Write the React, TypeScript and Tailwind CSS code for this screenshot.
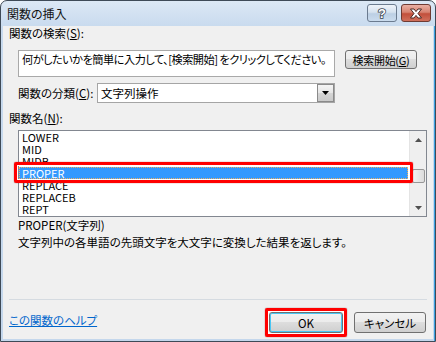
import React from "react";

const items = ["LOWER", "MID", "MIDB", "PROPER", "REPLACE", "REPLACEB", "REPT"];

const btn =
  "flex items-center justify-center rounded-[3px] border border-[#707070] bg-[linear-gradient(to_bottom,#f2f2f2_0%,#ebebeb_50%,#dddddd_50%,#cfcfcf_100%)] leading-[14px] text-black whitespace-nowrap";

export default function App() {
  return (
    <div className="w-[436px] h-[342px] bg-white font-['Noto_Sans_CJK_JP','Noto_Sans',sans-serif] [font-feature-settings:'palt'] text-[11.5px] text-black">
      <div className="w-[436px] h-[342px] flex flex-col border border-[#3e4a57] rounded-t-[7px] bg-[linear-gradient(to_bottom,#dce8f5_0px,#c8daee_26px,#c4d7ec_100%)] overflow-hidden">
        {/* Title bar */}
        <div className="h-[25px] flex items-start pl-[6px] pr-[4px]">
          <span className="mt-[5px] text-[12px] leading-[16px] text-[#111]">関数の挿入</span>
          <div className="ml-auto mt-[3px] flex gap-[4px]">
            <div className="w-[30px] h-[18px] rounded-[3px] border border-[#6b7b8f] bg-[linear-gradient(to_bottom,#eef3f9_0%,#d6e2ef_45%,#bccfe4_55%,#cbdcee_100%)] flex items-center justify-center">
              <svg width="12" height="14" viewBox="0 0 12 14">
                <text
                  x="6"
                  y="12"
                  textAnchor="middle"
                  fontSize="13"
                  fontWeight="bold"
                  fontFamily="Liberation Sans, sans-serif"
                  fill="#fff"
                  stroke="#3b4450"
                  strokeWidth="1.6"
                  paintOrder="stroke"
                >
                  ?
                </text>
              </svg>
            </div>
            <div className="w-[30px] h-[18px] rounded-[3px] border border-[#6e3b33] bg-[linear-gradient(to_bottom,#e9b0a3_0%,#d78371_45%,#c24f3b_55%,#d0705c_100%)] flex items-center justify-center">
              <svg width="16" height="11" viewBox="0 0 16 11">
                <path
                  d="M2.5 1 L6 1 L8 3.6 L10 1 L13.5 1 L10 5.5 L13.5 10 L10 10 L8 7.4 L6 10 L2.5 10 L6 5.5 Z"
                  fill="#fff"
                  stroke="#4a2a25"
                  strokeWidth="1"
                  strokeLinejoin="round"
                />
              </svg>
            </div>
          </div>
        </div>

        {/* Body */}
        <div className="flex-1 px-[2px] pb-[2px] shadow-[inset_-1px_0_0_#3aa0e0]">
          <div className="h-full bg-[#f0f0f0] pl-[6px] flex flex-col">
            <div className="h-[14px] leading-[14px]">
              関数の検索(<span className="underline">S</span>):
            </div>

            <div className="mt-[10px] ml-[9px] flex items-start">
              <div className="w-[317px] h-[27px] bg-white border border-[#a9a9a9] pl-[3px] pt-[1px] leading-[14px] whitespace-nowrap overflow-hidden">
                <span className="inline-block origin-left scale-x-[0.97] tracking-[-0.5px]">
                  何がしたいかを簡単に入力して、[検索開始] をクリックしてください。
                </span>
              </div>
              <div className={`${btn} ml-[10px] w-[72px] h-[19px] text-[11px] tracking-[-0.3px]`}>
                検索開始(<span className="underline">G</span>)
              </div>
            </div>

            <div className="mt-[6px] ml-[9px] flex items-center h-[20px]">
              <div className="w-[79px] leading-[20px] whitespace-nowrap">
                関数の分類(<span className="underline">C</span>):
              </div>
              <div className="w-[238px] h-[20px] bg-white border border-[#a5a5a5] flex items-stretch">
                <div className="flex-1 pl-[3px] leading-[18px]">文字列操作</div>
                <div className="w-[17px] border border-[#8a8a8a] bg-[linear-gradient(to_bottom,#f4f4f4_0%,#e6e6e6_50%,#d6d6d6_50%,#cacaca_100%)] flex items-center justify-center">
                  <svg width="7" height="4" viewBox="0 0 7 4">
                    <path d="M0 0 H7 L3.5 4 Z" fill="#000" />
                  </svg>
                </div>
              </div>
            </div>

            <div className="mt-[8px] h-[14px] leading-[14px]">
              関数名(<span className="underline">N</span>):
            </div>

            {/* List box */}
            <div className="relative mt-[5px] ml-[9px] w-[409px] h-[87px] bg-white border border-[#828790] flex">
              <div className="flex-1 flex flex-col">
                {items.map((it) =>
                  it === "PROPER" ? (
                    <div
                      key={it}
                      className="h-[12px] mr-[1px] bg-[#3399ff] text-white border border-dotted border-[#f0b060] pl-[2px] text-[11px] leading-[10px]"
                    >
                      {it}
                    </div>
                  ) : (
                    <div key={it} className="h-[12px] pl-[3px] text-[11px] leading-[12px]">
                      {it}
                    </div>
                  )
                )}
              </div>
              <div className="w-[17px] bg-[#efefef] border-l border-[#e4e4e4] flex flex-col">
                <div className="h-[17px] flex items-center justify-center">
                  <svg width="7" height="4" viewBox="0 0 7 4">
                    <path d="M0 4 H7 L3.5 0 Z" fill="#505050" />
                  </svg>
                </div>
                <div className="flex-1">
                  <div className="mt-[21px] mx-auto w-[13px] h-[14px] rounded-[2px] border border-[#979797] bg-[linear-gradient(to_right,#f2f2f2,#dcdcdc)]" />
                </div>
                <div className="h-[17px] flex items-center justify-center">
                  <svg width="7" height="4" viewBox="0 0 7 4">
                    <path d="M0 0 H7 L3.5 4 Z" fill="#505050" />
                  </svg>
                </div>
              </div>
              {/* annotation */}
              <div className="absolute left-[-5px] top-[31px] w-[399px] h-[21px] border-[3px] border-[#f00] rounded-[2px] shadow-[inset_0_0_0_1px_#fff,0_0_1px_#700]" />
            </div>

            <div className="ml-[9px] leading-[16px]">PROPER(文字列)</div>
            <div className="ml-[9px] mt-[1px] leading-[16px] whitespace-nowrap">
              文字列中の各単語の先頭文字を大文字に変換した結果を返します。
            </div>

            <div className="mt-[49px] w-[418px] h-[1px] bg-[#d5dbe1]" />

            <div className="mt-[12px] flex items-start pr-[7px]">
              <a href="#" className="leading-[16px] text-[#0066cc] underline">
                この関数のヘルプ
              </a>
              <div className="ml-auto relative">
                <div className={`${btn} w-[74px] h-[21px] border-[#3c7fb1] shadow-[inset_0_0_0_1px_#48c6f4]`}>OK</div>
                <div className="absolute -inset-[4px] border-[3px] border-[#f00] rounded-[2px] shadow-[inset_0_0_0_1px_#fff,0_0_1px_#700]" />
              </div>
              <div className={`${btn} ml-[11px] w-[72px] h-[21px]`}>キャンセル</div>
            </div>
          </div>
        </div>
      </div>
    </div>
  );
}
